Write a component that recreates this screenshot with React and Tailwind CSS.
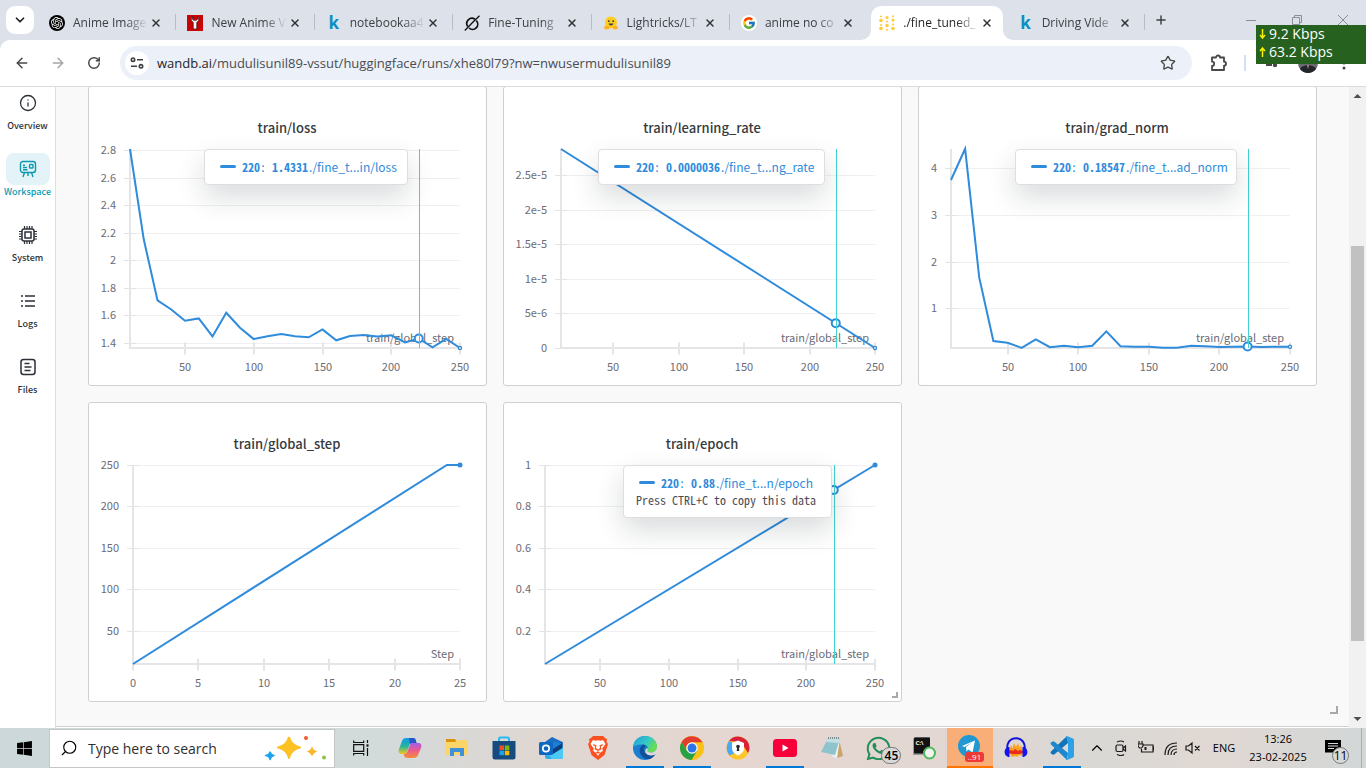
import React from "react";
import { SiOpenai } from "react-icons/si";
import { FcGoogle } from "react-icons/fc";
import { FaWhatsapp, FaWindows } from "react-icons/fa";
import { ArrowLeft, ArrowRight, RotateCw, Star, X, Plus, ChevronDown, ChevronUp, Search, Info } from "lucide-react";

const BLUE = "#2f8bdb";

/* ---------- browser tabs ---------- */

const KaggleIcon = () => (
  <span className="flex h-4 w-4 items-center justify-center font-['Open_Sans',sans-serif] text-[17px] leading-4 font-bold text-[#0a8fc2]">k</span>
);

const WrenchIcon = () => (
  <svg viewBox="0 0 16 16" className="h-4 w-4">
    <rect width="16" height="16" fill="#c90404" />
    <path d="M5.500 1.500 4.300 3v2.500L6.200 7.500V13c0 1.600 3.600 1.600 3.600 0V7.500l1.900-2V3l-1.200-1.500V4.300L9.300 5.200H6.700L5.500 4.300z" fill="#f4f4f4" stroke="#2a1010" strokeWidth=".7" />
  </svg>
);

const SlashRing = () => (
  <svg viewBox="0 0 16 16" className="h-4 w-4" fill="none" stroke="#111" strokeWidth="1.700">
    <path d="M11 4.200A5.200 5.200 0 0 0 3.800 11.500M5 13a5.200 5.200 0 0 0 7.300-7.400" />
    <path d="M15.500.8 6 10M.8 15.500 10 6" strokeWidth="1.300" />
  </svg>
);

const HugFace = () => (
  <svg viewBox="0 0 16 16" className="h-4 w-4">
    <circle cx="8" cy="7.500" r="6" fill="#ffcc1f" />
    <ellipse cx="3.800" cy="12.600" rx="2.800" ry="1.900" fill="#ffb21e" />
    <ellipse cx="12.200" cy="12.600" rx="2.800" ry="1.900" fill="#ffb21e" />
    <circle cx="5.800" cy="6.200" r=".9" fill="#3a3b45" />
    <circle cx="10.200" cy="6.200" r=".9" fill="#3a3b45" />
    <path d="M5.500 8.500c.8 2.600 4.200 2.600 5 0z" fill="#3a3b45" />
  </svg>
);

const WandbIcon = () => (
  <svg viewBox="0 0 16 16" className="h-4 w-4" fill="#ffcc33">
    <circle cx="2" cy="1.500" r="1" /><circle cx="2" cy="5.500" r="1.800" /><circle cx="2" cy="10" r="1" /><circle cx="2" cy="13.500" r="1.800" />
    <circle cx="8" cy="2.500" r="1.600" /><circle cx="8" cy="6.500" r="1" /><circle cx="8" cy="10.500" r="1.700" /><circle cx="8" cy="14.700" r="1" />
    <circle cx="14" cy="1.200" r="1" /><circle cx="14" cy="5" r="1.600" /><circle cx="14" cy="9.500" r="1" /><circle cx="14" cy="13.500" r="1.800" />
  </svg>
);

const TABS = [
  { title: "Anime Image", icon: <span className="flex h-4 w-4 items-center justify-center rounded-full bg-black text-white"><SiOpenai size={12} /></span> },
  { title: "New Anime V", icon: <WrenchIcon /> },
  { title: "notebookaa4", icon: <KaggleIcon /> },
  { title: "Fine-Tuning", icon: <SlashRing /> },
  { title: "Lightricks/LT", icon: <HugFace /> },
  { title: "anime no co", icon: <span className="flex h-4 w-4 items-center justify-center rounded-full bg-white"><FcGoogle size={14} /></span>, last: true },
  { title: "./fine_tuned_", icon: <WandbIcon />, active: true },
  { title: "Driving Vide", icon: <KaggleIcon /> },
];

function Tab({ tab }) {
  return (
    <div className="relative min-w-0 flex-1 pr-1 pl-[3px]">
      <div className={"relative flex h-[34px] items-center pr-2 pl-2 " + (tab.active ? "rounded-t-[10px] bg-white" : "")}>
        {tab.active && (
          <>
            <svg viewBox="0 0 10 10" className="absolute bottom-0 -left-[10px] h-[10px] w-[10px]"><path d="M10 0v10H0A10 10 0 0 0 10 0" fill="#fff" /></svg>
            <svg viewBox="0 0 10 10" className="absolute -right-[10px] bottom-0 h-[10px] w-[10px]"><path d="M0 0v10h10A10 10 0 0 1 0 0" fill="#fff" /></svg>
          </>
        )}
        <button type="button" role="tab" className="flex min-w-0 flex-1 items-center gap-2 text-left">
          <span className="shrink-0">{tab.icon}</span>
          <span className={"min-w-0 flex-1 text-[12px] leading-4 whitespace-nowrap [mask-image:linear-gradient(to_right,#000_70%,transparent)] " + (tab.active ? "text-[#1f1f1f]" : "text-[#3c4043]")}>{tab.title}</span>
        </button>
        <button type="button" aria-label="Close tab" className="flex h-4 w-4 shrink-0 items-center justify-center text-[#333]">
          <X size={12} strokeWidth={3} />
        </button>
      </div>
      {!tab.active && !tab.last && <span className="absolute top-2 right-0 h-4 w-px bg-[#b9bcc2]" />}
    </div>
  );
}

function BrowserChrome() {
  return (
    <header className="shrink-0 bg-[#dde1e9] font-['Open_Sans',sans-serif]">
      <div className="flex h-10 items-start pt-[6px] pl-[6px]">
        <button type="button" aria-label="Search tabs" className="flex h-7 w-7 shrink-0 items-center justify-center rounded-[9px] bg-white text-[#1f1f1f]">
          <ChevronDown size={14} strokeWidth={3} />
        </button>
        <nav role="tablist" className="ml-1 flex max-w-[1107px] min-w-0 flex-1">
          {TABS.map((t) => <Tab key={t.title} tab={t} />)}
        </nav>
        <button type="button" aria-label="New tab" className="ml-2 flex h-7 w-4 items-center justify-center text-[#3c4043]"><Plus size={14} strokeWidth={2.500} /></button>
        <div className="ml-auto flex h-7 text-[#8b8e94]">
          {["M0 5.500h10", "M.5 2.500h7v7h-7zM2.500 2.500v-2h7v7h-2", "M0 0l10 10M10 0 0 10"].map((d, i) => (
            <button key={d} type="button" aria-label={["Minimize", "Restore", "Close"][i]} className="flex h-7 w-[46px] items-center justify-center">
              <svg viewBox="0 0 10 10" className="h-[10px] w-[10px] overflow-visible" fill="none" stroke="currentColor"><path d={d} /></svg>
            </button>
          ))}
        </div>
      </div>
      <div className="flex h-[47px] items-center rounded-tl-[10px] border-b border-[#dcdcdc] bg-white pl-[10px]">
        <button type="button" aria-label="Back" className="flex h-9 w-6 items-center justify-center text-[#474747]"><ArrowLeft size={16} strokeWidth={2.200} /></button>
        <button type="button" aria-label="Forward" className="ml-3 flex h-9 w-6 items-center justify-center text-[#a5a5a5]"><ArrowRight size={16} strokeWidth={2.200} /></button>
        <button type="button" aria-label="Reload" className="ml-3 flex h-9 w-6 items-center justify-center text-[#474747]"><RotateCw size={14} strokeWidth={2.500} /></button>
        <div className="ml-[14px] flex h-[34px] min-w-0 flex-1 items-center rounded-full bg-[#ebf0f9] pr-4 pl-[5px]">
          <button type="button" aria-label="Site information" className="flex h-6 w-6 shrink-0 items-center justify-center rounded-full bg-white">
            <svg viewBox="0 0 14 12" className="h-3 w-[14px]" fill="none" stroke="#3c4043" strokeWidth="1.600">
              <circle cx="3" cy="2.700" r="1.700" /><path d="M7 2.700h6M1 9.300h6" /><circle cx="11" cy="9.300" r="1.700" />
            </svg>
          </button>
          <a href="#address" className="ml-2 min-w-0 flex-1 truncate text-[13px] leading-5 text-[#4a4d52]">
            <span className="text-[#1f1f1f]">wandb.ai</span>/mudulisunil89-vssut/huggingface/runs/xhe80l79?nw=nwusermudulisunil89
          </a>
          <button type="button" aria-label="Bookmark" className="text-[#474747]"><Star size={16} strokeWidth={2} /></button>
        </div>
        <div className="flex w-[174px] shrink-0 items-center pl-4">
          <button type="button" aria-label="Extensions" className="flex w-5 justify-center">
            <svg viewBox="0 0 20 20" className="h-5 w-5" fill="none" stroke="#474747" strokeWidth="1.800"><path d="M4 4.500h4a2 2 0 0 1 4 0h4v4.200a2 2 0 0 1 0 4V17H4v-4a2.200 2.200 0 0 0 0-4.400z" strokeLinejoin="round" /></svg>
          </button>
          <span className="ml-4 h-4 w-[2px] bg-[#cfe0fb]" />
          <svg viewBox="0 0 16 16" className="ml-[18px] h-4 w-4"><path d="M0 4h9M2 10h6" stroke="#474747" strokeWidth="2" /><circle cx="11" cy="10" r="2.200" fill="#474747" /></svg>
          <svg viewBox="0 0 20 20" className="ml-[18px] h-5 w-5"><circle cx="10" cy="10" r="10" fill="#6b6a70" /><path d="M2 16c2-5 14-5 16 0a10 10 0 0 1-16 0" fill="#23262b" /><path d="m9 12 1 4 1-4z" fill="#c98c8c" /></svg>
          <button type="button" aria-label="Menu" className="ml-[18px]">
            <svg viewBox="0 0 16 16" className="h-4 w-4" fill="#474747"><circle cx="8" cy="3" r="1.500" /><circle cx="8" cy="8" r="1.500" /><circle cx="8" cy="13" r="1.500" /></svg>
          </button>
        </div>
      </div>
    </header>
  );
}

function SpeedWidget() {
  return (
    <div className="absolute top-[25px] right-0 z-20 h-[39px] w-[110px] bg-[#26611f] pl-[3px] font-['Open_Sans',sans-serif] text-[14px] leading-[18px] text-white">
      {[["9.2 Kbps", "M3.500 0v9M1 6l2.500 3L6 6"], ["63.2 Kbps", "M3.500 10V1M1 4l2.500-3L6 4"]].map(([t, d]) => (
        <div key={t} className="flex items-center gap-[3px]">
          <svg viewBox="0 0 7 10" className="h-[10px] w-[7px]" fill="none" stroke="#f6f200" strokeWidth="1.500"><path d={d} /></svg>
          <span>{t}</span>
        </div>
      ))}
    </div>
  );
}

/* ---------- run sidebar ---------- */

const NAV = [
  { label: "Overview", icon: <Info size={18} strokeWidth={1.700} /> },
  {
    label: "Workspace", active: true,
    icon: (
      <svg viewBox="0 0 18 18" className="h-[18px] w-[18px]" fill="none" stroke="currentColor" strokeWidth="1.400">
        <rect x="1.500" y="1.500" width="15" height="11" rx="2.500" /><rect x="10.500" y="4.500" width="3.500" height="3.500" rx=".8" />
        <path d="M4 5.200h2M4 7.500h4M4 9.800h4.500M5.500 12.500 4 17M12.500 12.500 14 17M9 12.500V16" />
      </svg>
    ),
  },
  {
    label: "System",
    icon: (
      <svg viewBox="0 0 18 18" className="h-[18px] w-[18px]" fill="none" stroke="currentColor" strokeWidth="1.500">
        <rect x="3" y="3" width="12" height="12" rx="2" /><rect x="6" y="6" width="6" height="6" />
        <path d="M5.500 0v3M8 0v3M10.500 0v3M13 0v3M5.500 15v3M8 15v3M10.500 15v3M13 15v3M0 5.500h3M0 8h3M0 10.500h3M0 13h3M15 5.500h3M15 8h3M15 10.500h3M15 13h3" strokeWidth="1.200" />
      </svg>
    ),
  },
  {
    label: "Logs",
    icon: (
      <svg viewBox="0 0 18 18" className="h-[18px] w-[18px]" stroke="currentColor" strokeWidth="1.400"><path d="M2 4h2M6 4h10M2 9h2M6 9h10M2 14h2M6 14h10" /></svg>
    ),
  },
  {
    label: "Files",
    icon: (
      <svg viewBox="0 0 18 18" className="h-[18px] w-[18px]" fill="none" stroke="currentColor" strokeWidth="1.500"><rect x="2" y="1.500" width="14" height="15" rx="2.500" /><path d="M5.500 5.500h5M5.500 9h7M5.500 12.500h6" /></svg>
    ),
  },
];

function Sidebar() {
  return (
    <nav className="flex w-14 shrink-0 flex-col gap-5 border-r border-[#dedede] bg-white">
      {NAV.map((n) => (
        <a key={n.label} href={"#" + n.label.toLowerCase()} className={"flex h-[46px] flex-col items-center " + (n.active ? "text-[#0a9ab0]" : "text-[#2b3038]")}>
          <span className={"flex h-8 w-11 items-center justify-center rounded-lg " + (n.active ? "bg-[#e3f3f7]" : "")}>{n.icon}</span>
          <span className="text-[9px] leading-[14px] font-medium">{n.label}</span>
        </a>
      ))}
    </nav>
  );
}

/* ---------- charts ---------- */

const LOSS = [2.809, 2.153, 1.71, 1.644, 1.562, 1.579, 1.448, 1.62, 1.511, 1.429, 1.45, 1.465, 1.449, 1.442, 1.499, 1.42, 1.451, 1.458, 1.447, 1.456, 1.405, 1.4331, 1.369, 1.43, 1.364];
const GRAD = [3.744, 4.41, 1.655, 0.302, 0.265, 0.155, 0.337, 0.17, 0.2, 0.17, 0.2, 0.508, 0.19, 0.18, 0.18, 0.16, 0.16, 0.2, 0.19, 0.175, 0.18, 0.185, 0.175, 0.18, 0.18];
const byStep = (values) => values.map((v, i) => [(i + 1) * 10, v]);
const STEPS = [50, 100, 150, 200, 250];

const CHARTS = [
  {
    title: "train/loss", left: 41, x: [10, 250], y: [1.364, 2.809], xTicks: STEPS,
    yTicks: [[2.8, "2.8"], [2.6, "2.6"], [2.4, "2.4"], [2.2, "2.2"], [2, "2"], [1.8, "1.8"], [1.6, "1.6"], [1.4, "1.4"]],
    points: byStep(LOSS), axis: "train/global_step", hover: [220, 1.4331], hollowEnd: true,
    tip: { value: "1.4331", name: "./fine_t...in/loss", place: "left-[115px] w-[204px]" },
  },
  {
    title: "train/learning_rate", left: 57, x: [10, 250], y: [0, 2.88], xTicks: STEPS,
    yTicks: [[2.5, "2.5e-5"], [2, "2e-5"], [1.5, "1.5e-5"], [1, "1e-5"], [0.5, "5e-6"], [0, "0"]],
    points: [[10, 2.88], [250, 0]], axis: "train/global_step", hover: [220, 0.36], hollowEnd: true,
    tip: { value: "0.0000036", name: "./fine_t...ng_rate", place: "left-[94px] w-[227px]" },
  },
  {
    title: "train/grad_norm", left: 32, x: [10, 250], y: [0.152, 4.406], xTicks: STEPS,
    yTicks: [[4, "4"], [3, "3"], [2, "2"], [1, "1"]],
    points: byStep(GRAD), axis: "train/global_step", hover: [220, 0.18547], hollowEnd: true,
    tip: { value: "0.18547", name: "./fine_t...ad_norm", place: "left-[96px] w-[222px]" },
  },
  {
    title: "train/global_step", left: 44, x: [0, 25], y: [10, 250], xTicks: [0, 5, 10, 15, 20, 25],
    yTicks: [[250, "250"], [200, "200"], [150, "150"], [100, "100"], [50, "50"]],
    points: [[0, 10], [24, 250], [25, 250]], axis: "Step",
  },
  {
    title: "train/epoch", left: 41, x: [10, 250], y: [0.04, 1], xTicks: STEPS,
    yTicks: [[1, "1"], [0.8, "0.8"], [0.6, "0.6"], [0.4, "0.4"], [0.2, "0.2"]],
    points: [[10, 0.04], [250, 1]], axis: "train/global_step", hover: [220, 0.88],
    tip: { value: "0.88", name: "./fine_t...n/epoch", place: "left-[119px] w-[209px]", note: "Press CTRL+C to copy this data" }, resizable: true,
  },
];

const TOP = 62;
const BOTTOM = 261;
const RIGHT = 371;

function ResizeCorner({ className }) {
  return <span className={"border-r-2 border-b-2 border-[#a9a9a9] " + className} />;
}

function ChartCard({ chart }) {
  const { left, x, y } = chart;
  const px = (v) => left + ((v - x[0]) / (x[1] - x[0])) * (RIGHT - left);
  const py = (v) => BOTTOM - ((v - y[0]) / (y[1] - y[0])) * (BOTTOM - TOP);
  const last = chart.points[chart.points.length - 1];
  return (
    <section className="relative rounded-[3px] border border-[#cfcfcf] bg-white">
      <svg viewBox="0 0 397 298" className="block w-full" fontSize="11" fill="#6b6b76">
        <text x="198" y="46" textAnchor="middle" className="text-[13px] font-medium" fill="#363a3d">{chart.title}</text>
        {chart.yTicks.map(([v, label]) => {
          const yy = Math.round(py(v));
          return (
            <g key={label}>
              <path d={`M${left} ${yy + 0.5}H${RIGHT}`} stroke="#f0f0f2" />
              <path d={`M${left - 6} ${yy + 0.5}h12`} stroke="#e3e3e6" />
              <text x={left - 14} y={yy + 4} textAnchor="end">{label}</text>
            </g>
          );
        })}
        <path d={`M${left} ${TOP}V${BOTTOM}H${RIGHT}`} fill="none" stroke="#e5e5e7" strokeWidth="2" />
        {chart.xTicks.map((v) => (
          <g key={v}>
            <path d={`M${Math.round(px(v))} 255.500v12`} stroke="#e5e5e7" strokeWidth="2" />
            <text x={Math.round(px(v))} y="284" textAnchor="middle">{v}</text>
          </g>
        ))}
        <text x="365" y="255" textAnchor="end">{chart.axis}</text>
        <polyline points={chart.points.map((p) => `${px(p[0])},${py(p[1])}`).join(" ")} fill="none" stroke={BLUE} strokeWidth="2" />
        <circle cx={px(last[0])} cy={py(last[1])} r={chart.hollowEnd ? 2.2 : 2.5} fill={BLUE} />
        {chart.hollowEnd && <circle cx={px(last[0])} cy={py(last[1])} r="1" fill="#dfe9f3" />}
        {chart.hover && (
          <>
            <circle cx={px(chart.hover[0])} cy={py(chart.hover[1])} r="4" fill="#fff" stroke={BLUE} strokeWidth="2" />
            <path d={`M${Math.round(px(chart.hover[0])) + 0.5} ${TOP}V${BOTTOM}`} stroke="#3fd3d4" />
          </>
        )}
      </svg>
      {chart.tip && (
        <div className={"absolute top-[62px] rounded-[4px] border border-[#dedee0] bg-white pt-2 pb-[9px] pl-3 text-[12px] leading-[17px] whitespace-nowrap text-[#2f8bdb] shadow-[0_12px_28px_rgba(20,30,35,0.16)] " + chart.tip.place}>
          <div className="flex items-center">
            <span className="ml-[3px] h-[3px] w-4 rounded-full bg-[#2f8bdb]" />
            <span className="ml-[6px] font-['Noto_Sans_Mono_CJK_SC','Noto_Sans_CJK_SC',monospace]"><b>220</b>: <b>{chart.tip.value}</b></span>
            <span className="ml-px">{chart.tip.name}</span>
          </div>
          {chart.tip.note && <p className="font-['Noto_Sans_Mono_CJK_SC','Noto_Sans_CJK_SC',monospace] text-[#4d4d55]">{chart.tip.note}</p>}
        </div>
      )}
      {chart.resizable && <ResizeCorner className="absolute right-[3px] bottom-[3px] h-[6px] w-[6px]" />}
    </section>
  );
}

function Workspace() {
  return (
    <main className="flex min-w-0 flex-1 flex-col overflow-hidden border-b border-[#cfcfcf] bg-[#f9f9f9]">
      <div className="-mt-px grid grid-cols-3 gap-4 px-8">
        {CHARTS.map((c) => <ChartCard key={c.title} chart={c} />)}
      </div>
      <ResizeCorner className="mt-1 mr-[11px] ml-auto h-2 w-2" />
    </main>
  );
}

function Scrollbar() {
  return (
    <div aria-hidden="true" className="flex w-[17px] shrink-0 flex-col items-center bg-[#f1f1f1]">
      <svg viewBox="0 0 17 17" className="h-[17px] w-[17px]"><path d="m4.500 11 4-4 4 4z" fill="#505050" /></svg>
      <div className="w-[13px] flex-[142]" />
      <div className="w-[13px] flex-[395] bg-[#c1c1c1]" />
      <div className="w-[13px] flex-[70]" />
      <svg viewBox="0 0 17 17" className="h-[17px] w-[17px]"><path d="m4.500 6 4 4 4-4z" fill="#505050" /></svg>
    </div>
  );
}

/* ---------- taskbar ---------- */

const CopilotIcon = () => (
  <svg viewBox="0 0 24 22" className="h-[22px] w-6">
    <defs>
      <linearGradient id="cp1" x1="0" y1="0" x2="0" y2="1"><stop offset="0" stopColor="#1599ea" /><stop offset=".5" stopColor="#22b3a0" /><stop offset="1" stopColor="#f5c81c" /></linearGradient>
      <linearGradient id="cp2" x1="0" y1="0" x2="0" y2="1"><stop offset="0" stopColor="#a45be8" /><stop offset=".5" stopColor="#ee5a86" /><stop offset="1" stopColor="#f5903c" /></linearGradient>
    </defs>
    <path d="M8 1h7c2 0 2.500 1 3 3l.5 2h-4c-2 0-2.700 1-3.200 2.500L9 15c-.5 1.500-1.500 2-3 2H4c-3 0-4-2-3-5L4 4c.7-2 2-3 4-3" fill="url(#cp1)" />
    <path d="M16 21H9c-2 0-2.500-1-3-3l-.3-1c2 0 3.300-.6 3.800-2.500L12 8c.5-1.500 1.500-2 3-2h5c3 0 4 2 3 5l-3 7c-.7 2-2 3-4 3" fill="url(#cp2)" />
    <path d="M11 1h4c2 0 2.500 1 3 3l.5 2h-4c-1.300 0-2 .5-2.500 1.300z" fill="#2456c9" />
  </svg>
);

const ExplorerIcon = () => (
  <svg viewBox="0 0 22 20" className="h-5 w-[22px]"><path d="M0 1h9l2 3H0z" fill="#d9930d" /><path d="M0 4h9l2-2h11v15H0z" fill="#fbd568" /><path d="M4 10h14v8h-4v-4H8v4H4z" fill="#3f90d8" /></svg>
);

const StoreIcon = () => (
  <svg viewBox="0 0 24 24" className="h-6 w-6">
    <path d="M7 6V3q0-1.500 1.500-1.500h7Q17 1.500 17 3v3" fill="none" stroke="#25bdf2" strokeWidth="2" />
    <path d="M.5 5h23v16q0 2.500-2.500 2.500H3Q.5 23.500.5 21z" fill="#154b7f" />
    <path d="M7.500 9.500H12V14H7.500z" fill="#f04e23" /><path d="M12.800 9.500h4.500V14h-4.500z" fill="#7db900" /><path d="M7.500 14.700H12v4.500H7.500z" fill="#16a6ef" /><path d="M12.800 14.700h4.500v4.500h-4.500z" fill="#fdb900" />
  </svg>
);

const OutlookIcon = () => (
  <svg viewBox="0 0 24 22" className="h-[22px] w-6">
    <path d="m6 5 7-5 10.500 5v8H6z" fill="#1a6fc4" /><path d="M6 9h18v11q0 2-2 2H8q-2 0-2-2z" fill="#2dadec" /><path d="m24 9-14 9 3 4h9q2 0 2-2z" fill="#4dc9f7" /><path d="M14 5h9.500v6L14 17z" fill="#0d3f7e" /><path d="M14 5h5l4.500 1L14 12z" fill="#1c7fd6" />
    <rect y="5" width="14" height="13" rx="1.500" fill="#0e67c1" /><circle cx="7" cy="11.500" r="3.200" fill="none" stroke="#fff" strokeWidth="1.700" />
  </svg>
);

const BraveIcon = () => (
  <svg viewBox="0 0 20 24" className="h-6 w-5">
    <path d="m5 0-2 2-2 1 .5 3L0 8l3.500 11L10 24l6.500-5L20 8l-1.500-2 .5-3-2-1-2-2z" fill="#fb5121" />
    <path d="m5 4 2.500.8L10 4.300l2.500.5L15 4l2.500 4-3.200 4.300.5 2.700-2.800 1.700L10 20l-2-3.300L5.200 15l.5-2.700L2.500 8z" fill="#fff" />
    <path d="m5 8 3.500 1.200L8 12l2 1.500 2-1.500-.5-2.800L15 8l-.6 1.800-1.600.8.7 2.600L10 15l-3.500-1.800.7-2.600-1.600-.8z" fill="#fb5121" />
    <path d="m7.800 16.200 2.200-1 2.200 1-2.200 1.500z" fill="#fb5121" />
  </svg>
);

const EdgeIcon = () => (
  <svg viewBox="0 0 24 24" className="h-6 w-6">
    <defs>
      <linearGradient id="ed1" x1="0" y1="0" x2="1" y2=".5"><stop offset="0" stopColor="#1f9de0" /><stop offset=".6" stopColor="#35c9c4" /><stop offset="1" stopColor="#6ade4f" /></linearGradient>
    </defs>
    <circle cx="12" cy="12" r="12" fill="#1a7fd0" />
    <path d="M0 11C1 4 6 0 12 0c7 0 12 5 12 10.500 0 4-3 6-6 6-2.500 0-4-1-3.500-2 2-3-1-6-4.500-6C5 8 1 10 0 11" fill="url(#ed1)" />
    <path d="M10 8.500c-3 2-4 5-3 8.500 1.500 4.500 6 7 10.500 5.800A12 12 0 0 0 22.500 18c-4 2-9 1.500-10.800-1.500-1.500-2.500-.7-5.200 1.300-6.500-.8-.9-1.900-1.400-3-1.500" fill="#12509a" />
    <path d="M14.500 14.500c-.5 1 1 2 3.500 2 2.700 0 6-2 6-6V16l-1.500 2.300c-4 2-7.500 1.200-9.300-.8-1.600-2-.8-4.500 1-5.500.8 1 1 1.700.3 2.500" fill="#e3dad7" />
  </svg>
);

const ChromeIcon = () => (
  <svg viewBox="0 0 24 24" className="h-6 w-6">
    <circle cx="12" cy="12" r="12" fill="#fbc116" />
    <path d="M1.600 6A12 12 0 0 1 22.400 6.300H12a5.700 5.700 0 0 0-5 8.500z" fill="#e33b2e" />
    <path d="M1.600 6A12 12 0 0 0 11.500 24L17 15H7z" fill="#26a148" /><circle cx="12" cy="12" r="5.700" fill="#fff" /><circle cx="12" cy="12" r="4.500" fill="#2d74e7" />
  </svg>
);

const LockBrowserIcon = () => (
  <svg viewBox="0 0 24 24" className="h-6 w-6">
    <circle cx="12" cy="12" r="11.500" fill="#ffc62b" /><path d="M3 5A11.500 11.500 0 0 1 23.500 12c0 2-1 4-1.500 5L15 6z" fill="#d9213b" /><path d="M3 5A11.500 11.500 0 0 0 3.500 19.500L9 17 7 7z" fill="#4aa8f5" />
    <path d="M12 4.500 18 7v5c0 4-3 6-6 7.500C9 18 6 16 6 12V7z" fill="#fff" /><circle cx="12" cy="10.500" r="1.800" fill="#2a2a33" /><path d="M11.200 11h1.600l.5 4h-2.600z" fill="#2a2a33" />
  </svg>
);

const YoutubeIcon = () => (
  <svg viewBox="0 0 24 18" className="h-[18px] w-6"><rect width="24" height="18" rx="3.500" fill="#f7003a" /><path d="m9.500 5.500 6 3.500-6 3.500z" fill="#fff" /></svg>
);

const NotepadIcon = () => (
  <svg viewBox="0 0 24 24" className="h-6 w-6"><path d="m19 3 4 17-6 2z" fill="#c9a56b" /><path d="M8 3h12l-3 19-4-1z" fill="#eef1f1" /><path d="M8 2h12l-5 17L1 16z" fill="#8fc3cc" /><path d="M8 2h12l-1.500 5L6 6z" fill="#c4dfe2" /><path d="M8 2h12" stroke="#7b8a8c" strokeDasharray="1 1" strokeWidth="2" /></svg>
);

const TerminalIcon = () => (
  <svg viewBox="0 0 24 24" className="h-6 w-6">
    <path d="m1 3 2-2h15v15l-2 3H1z" fill="#9a9a9a" /><rect x="2" y="1.500" width="16" height="16" rx="1" fill="#131313" />
    <text x="3.500" y="8.500" fontSize="6" fontWeight="700" fill="#fff">C:\</text>
    <circle cx="17.500" cy="17" r="5.500" fill="#f3f3f3" stroke="#4fb95a" strokeWidth="2" />
  </svg>
);

const TelegramIcon = () => (
  <svg viewBox="0 0 24 24" className="h-6 w-6"><circle cx="11" cy="11" r="11" fill="#2298d3" /><path d="m4 11 13-5.500-2.500 12-4-3-2 2-.5-4.500 6-4.500-7.500 4.500z" fill="#fff" /></svg>
);

const AudacityIcon = () => (
  <svg viewBox="0 0 24 24" className="h-6 w-6"><path d="m5 16 2-7 1.500 3L10 7l2 4 2-4 1.500 5L17 9l2 7-1 4-3-1-2 2-2-1-3 1z" fill="#fba01c" /><path d="m5 15 2-1 2 1 2-2 3 2 2-1 3 1v2l-3 1H8l-3-1z" fill="#e92a1d" /><path d="M3.500 15C2 7 6 2.200 12 2.200S22 7 20.500 15" fill="none" stroke="#1414d8" strokeWidth="2" /><path d="M5.500 11v10C-1 21-1 11 5.500 11M18.500 11v10c6.500 0 6.500-10 0-10" fill="#1414f0" /></svg>
);

const VsCodeIcon = () => (
  <svg viewBox="0 0 24 24" className="h-6 w-6"><path d="m17 0-1 1L1 15.500q-1 1 0 2l1.500 1q1 .5 2-.2L18 7z" fill="#1173b8" /><path d="m17 24-1-1L1 8.500q-1-1 0-2l1.500-1q1-.5 2 .2L18 17z" fill="#1c86cf" /><path d="m17 0 6 2.500q1 .5 1 1.500v16q0 1-1 1.500L17 24q-1 0-1-1.500l2-1V5l-2-3.500Q16 0 17 0" fill="#2ba2e8" /></svg>
);

const Badge = ({ children, className }) => (
  <span className={"absolute flex h-[17px] items-center justify-center rounded-full border border-[#777] bg-[#d8d8d8] text-[12px] leading-none text-black " + className}>{children}</span>
);

const WIDE_APPS = [
  { name: "Copilot", icon: <CopilotIcon /> },
  { name: "File Explorer", icon: <ExplorerIcon /> },
  { name: "Microsoft Store", icon: <StoreIcon /> },
  { name: "Outlook", icon: <OutlookIcon /> },
  { name: "Brave", icon: <BraveIcon /> },
  { name: "Edge", icon: <EdgeIcon />, open: true },
  { name: "Chrome", icon: <ChromeIcon />, open: true },
  { name: "Secure Browser", icon: <LockBrowserIcon /> },
  { name: "YouTube", icon: <YoutubeIcon />, open: true },
  { name: "Notepad", icon: <NotepadIcon /> },
];

const APPS = [
  { name: "WhatsApp", icon: <><FaWhatsapp size={27} color="#1f8f57" /><Badge className="right-0 bottom-[4px] w-5 font-semibold">45</Badge></> },
  { name: "Terminal", icon: <TerminalIcon /> },
  { name: "Telegram", alert: true, icon: <><TelegramIcon /><span className="absolute right-[9px] bottom-[4px] rounded-[3px] bg-[#ee3a34] px-[3px] text-[8px] leading-[10px] text-white">..91</span></> },
  { name: "Audacity", icon: <AudacityIcon /> },
  { name: "Visual Studio Code", icon: <VsCodeIcon />, open: true },
];

const AppButton = ({ app, width }) => (
  <button type="button" aria-label={app.name} className={"relative flex h-10 items-center justify-center " + width + (app.alert ? " border-b-2 border-[#ff7300] bg-[#f9ae78]" : "")}>
    {app.icon}
    {app.open && <span className="absolute bottom-0 left-1/2 h-[2px] w-[38px] -translate-x-1/2 bg-[#0078d7]" />}
  </button>
);

const TrayIcon = ({ label, width, children }) => (
  <button type="button" aria-label={label} className={"flex h-10 items-center justify-center " + width}>
    <svg viewBox="0 0 16 16" className="h-4 w-4" fill="none" stroke="#1a1a1a" strokeWidth="1.200">{children}</svg>
  </button>
);

function Taskbar() {
  return (
    <footer className="flex h-10 shrink-0 items-center bg-[linear-gradient(90deg,#cdd8da_0%,#d3dada_28%,#e0d7d2_40%,#e6d6d1_58%,#e0d7d3_72%,#d9d8d5_80%,#e1d8d3_89%,#d1d7d7_100%)] font-['Open_Sans',sans-serif] text-black">
      <button type="button" aria-label="Start" className="flex h-10 w-[49px] shrink-0 items-center justify-center"><FaWindows size={17} /></button>
      <label className="flex h-[39px] w-[286px] shrink-0 items-center border border-[#c6c6c6] bg-white pl-[10px]">
        <Search size={18} strokeWidth={1.500} className="-scale-x-100" />
        <input aria-label="Search" placeholder="Type here to search" className="ml-[10px] w-[150px] text-[14px] outline-none placeholder:text-[#303030]" />
        <svg viewBox="0 0 62 26" className="mr-2 ml-auto h-[26px] w-[62px]">
          <path d="M25 2q2 8.500 11 10.500-9 2-11 10.500-2-8.500-11-10.500Q23 10.500 25 2" fill="#fcc223" stroke="#fcc223" strokeWidth="2" strokeLinejoin="round" />
          <path d="M48 11q1 4.500 5.500 5.500Q49 17.500 48 22q-1-4.500-5.500-5.500Q47 15.500 48 11" fill="#fbb72a" />
          <path d="M6 16.500q.5 3 4 4-3 .5-4 4-.5-3.500-4.500-4 4-.5 4.500-4" fill="#1aa3ef" stroke="#1aa3ef" strokeWidth="1.500" strokeLinejoin="round" />
          <circle cx="42" cy="3" r="2" fill="#f0592b" /><circle cx="60" cy="22.500" r="2" fill="#8bc53f" />
        </svg>
      </label>
      <button type="button" aria-label="Task view" className="flex h-10 w-[52px] shrink-0 items-center justify-center">
        <svg viewBox="0 0 16 16" className="h-4 w-4" fill="none" stroke="#111" strokeWidth="1.200"><path d="M.7.500v2h10v-2M.7 15.500v-2h10v2M.7 4.700h10v6.600H.7zM14.500 0v3M14.500 8v8" /><path d="M13.500 4.300h2v2.400h-2z" fill="#111" stroke="none" /></svg>
      </button>
      {WIDE_APPS.map((a) => <AppButton key={a.name} app={a} width="w-[47px]" />)}
      {APPS.map((a) => <AppButton key={a.name} app={a} width="w-[46px]" />)}
      <div className="mr-1 ml-auto flex h-10 items-center border-r border-[#a8adad]">
        <button type="button" aria-label="Show hidden icons" className="flex h-10 w-6 items-center justify-center"><ChevronUp size={18} strokeWidth={1.500} /></button>
        <TrayIcon label="Camera" width="w-6"><rect x="3" y="5" width="7" height="6.500" rx="1.500" /><path d="m10 8 2.500-2v5L10 9M4 2q4-2 7 0M4 14.500q4 2 7 0" /></TrayIcon>
        <TrayIcon label="Battery" width="w-[26px]"><path d="M5 5h10v7H3.500V9M15 7h1v3h-1M1 1v2.500M4 1v2.500M0 4h5v2L3.500 8h-2L0 6z" /><path d="M6.500 7h2v3h-2z" fill="#1a1a1a" stroke="none" /></TrayIcon>
        <TrayIcon label="Network" width="w-6"><path d="M2 15Q2 3 14 3M5 15q0-9 9-9M8 15q0-6 6-6M11 15q0-3 3-3" /></TrayIcon>
        <TrayIcon label="Volume" width="w-5"><path d="M1 6h2.500L7 3v10l-3.500-3H1zM10 6l4.500 4.500M14.500 6 10 10.500" /></TrayIcon>
        <span className="w-[42px] text-center text-[11px]">ENG</span>
        <div className="w-[66px] text-center text-[11px] leading-[18px] whitespace-nowrap">
          <div>13:26</div>
          <div>23-02-2025</div>
        </div>
        <button type="button" aria-label="Notifications" className="relative flex h-10 w-[50px] items-center pl-[14px]">
          <svg viewBox="0 0 16 16" className="h-4 w-4"><path d="M0 0h16v12.500h-4.500V16L8 12.500H0z" fill="#000" /><path d="M3 3.500h10M3 6h10M3 8.500h6" stroke="#d8d8d8" /></svg>
          <Badge className="right-[12px] bottom-[4px] w-[17px]">11</Badge>
        </button>
      </div>
    </footer>
  );
}

export default function App() {
  return (
    <div className="relative flex min-h-screen flex-col overflow-hidden bg-white font-['Noto_Sans_CJK_SC',sans-serif]">
      <BrowserChrome />
      <SpeedWidget />
      <div className="flex flex-1">
        <Sidebar />
        <div className="flex min-w-0 flex-1 pb-px"><Workspace /></div>
        <Scrollbar />
      </div>
      <Taskbar />
    </div>
  );
}
